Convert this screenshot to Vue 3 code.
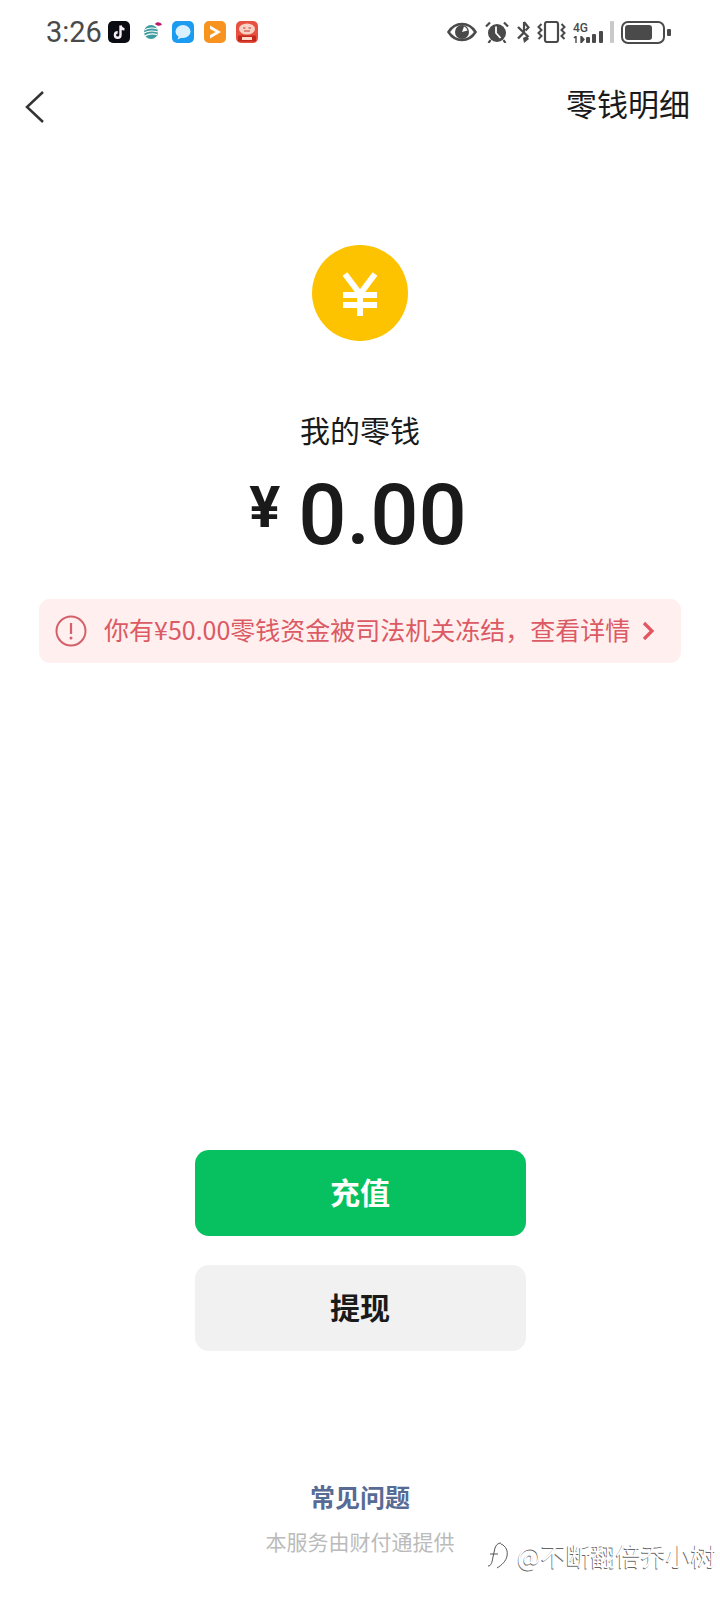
<template>
  <div class="page">
    <div class="status-bar">
      <span class="time">3:26</span>
      <div class="app-icons">
        <svg class="app" viewBox="0 0 22 22">
          <rect width="22" height="22" rx="5" fill="#0b0b12" />
          <path d="M12.500 4.500v9.500a2.800 2.800 0 1 1-2.800-2.800M12.500 4.500c.3 2.200 1.700 3.700 4 3.900" fill="none" stroke="#f6eef2" stroke-width="2.400" />
        </svg>
        <svg class="app" viewBox="0 0 22 22">
          <circle cx="11" cy="11" r="7" fill="#3f9b9e" />
          <path d="M4.500 9c4-2.500 8-2.500 13-1M4 12c4-2.500 9-2.500 14-1M5 15c3-2 8-2.500 12-1.500" fill="none" stroke="#fff" stroke-width="1.100" />
          <path d="M15 3c1.500-2.500 5-2 7 .5-2 1.800-5 1.800-7-.5z" fill="#c2186b" />
        </svg>
        <svg class="app" viewBox="0 0 22 22">
          <rect width="22" height="22" rx="5" fill="#1c9cf0" />
          <ellipse cx="11" cy="10.500" rx="7.500" ry="6.500" fill="#d9f0ff" />
          <path d="M7 14.500l-1.500 4 5.500-2.500z" fill="#d9f0ff" />
        </svg>
        <svg class="app" viewBox="0 0 22 22">
          <rect width="22" height="22" rx="5" fill="#f7931e" />
          <path d="M6 4.500l11 6.500-11 6.500v-3.500l5.500-3-5.500-3z" fill="#fff" />
        </svg>
        <svg class="app" viewBox="0 0 22 22">
          <rect width="22" height="22" rx="5" fill="#e8503f" />
          <ellipse cx="11" cy="8" rx="8" ry="5.500" fill="#f9d2c6" />
          <path d="M7 7h2.500M12.500 7H15M8 10h6" stroke="#c23b2e" stroke-width="1.200" />
          <rect x="2" y="14.500" width="18" height="6" rx="1" fill="#c4281c" />
          <rect x="6" y="16" width="10" height="3" fill="#ffd9c9" />
        </svg>
      </div>
      <div class="sys-icons">
        <svg class="eye" viewBox="0 0 30 20">
          <path d="M1.500 10C5 4.500 10 2 15 2s10 2.500 13.500 8C25 15.500 20 18 15 18S5 15.500 1.500 10z" fill="none" stroke="#4a4a4a" stroke-width="2.600" />
          <circle cx="15" cy="10" r="7" fill="#4a4a4a" />
          <path d="M15 10l2-5.500a6 6 0 0 1 3.500 4z" fill="#fff" />
        </svg>
        <svg class="alarm" viewBox="0 0 24 22">
          <circle cx="12" cy="12" r="9" fill="#4a4a4a" />
          <path d="M11 5.500V12l4.500 5" fill="none" stroke="#fff" stroke-width="1.800" />
          <path d="M1 5.500l4-4M23 5.500l-4-4M5.500 19l-2 3M18.500 19l2 3" stroke="#4a4a4a" stroke-width="2.200" fill="none" />
        </svg>
        <svg class="bluetooth" viewBox="0 0 13 23">
          <path d="M1 6l10.500 10M1 17.500l6-6" fill="none" stroke="#4a4a4a" stroke-width="2.400" />
          <path d="M7 1v10M7 1l4.500 5.500-3 3" fill="none" stroke="#4a4a4a" stroke-width="2.200" />
          <path d="M6 17l4-2 2 3-5 4z" fill="#4a4a4a" />
        </svg>
        <svg class="vibrate" viewBox="0 0 29 22">
          <rect x="8" y="1" width="13" height="20" rx="2" fill="none" stroke="#4a4a4a" stroke-width="2.200" />
          <path d="M4.500 3L1.500 6l3 3-3 3 3 3-3 3M24.500 3l3 3-3 3 3 3-3 3 3 3" fill="none" stroke="#4a4a4a" stroke-width="2" />
        </svg>
        <div class="signal">
          <div class="net">
            <span class="net-label">4G</span>
            <svg class="arrows" viewBox="0 0 13 7">
              <path d="M3 0v7M1 2l2-2M8 0l3 3.500L8 7z" stroke="#4a4a4a" stroke-width="1.400" fill="#4a4a4a" />
            </svg>
          </div>
          <svg class="bars" viewBox="0 0 28 22">
            <rect x="0" y="16" width="4" height="6" rx="1" fill="#4a4a4a" />
            <rect x="6" y="13" width="4" height="9" rx="1" fill="#4a4a4a" />
            <rect x="13" y="10" width="4" height="12" rx="1" fill="#4a4a4a" />
            <rect x="24" y="0" width="4" height="22" rx="1" fill="#c9c9c9" />
          </svg>
        </div>
        <div class="battery">
          <div class="battery-body"><div class="battery-fill"></div></div>
          <div class="battery-nub"></div>
        </div>
      </div>
    </div>

    <div class="nav">
      <svg class="back" viewBox="0 0 20 34">
        <path d="M18 2L2 17l16 15" fill="none" stroke="#333" stroke-width="2.500" />
      </svg>
      <span class="nav-title">零钱明细</span>
    </div>

    <svg class="coin" viewBox="0 0 96 96">
      <circle cx="48" cy="48" r="48" fill="#fdc300" />
      <path d="M33 29l15 20 15-20M48 49v22M31 50h34M31 60h34" fill="none" stroke="#fff" stroke-width="6" />
    </svg>

    <p class="label">我的零钱</p>
    <div class="amount">
      <span class="currency">¥</span>
      <span class="value">{{ saldo }}</span>
    </div>

    <div class="notice">
      <svg class="notice-icon" viewBox="0 0 32 32">
        <circle cx="16" cy="16" r="14.500" fill="none" stroke="#d4606a" stroke-width="2" />
        <path d="M16 8v11" stroke="#d4606a" stroke-width="2.200" />
        <circle cx="16" cy="23" r="1.500" fill="#d4606a" />
      </svg>
      <span class="notice-text">你有¥50.00零钱资金被司法机关冻结，查看详情</span>
      <svg class="notice-arrow" viewBox="0 0 13 20">
        <path d="M2 2l8 8-8 8" fill="none" stroke="#e25561" stroke-width="3.200" />
      </svg>
    </div>

    <button class="btn btn-green">充值</button>
    <button class="btn btn-gray">提现</button>

    <div class="faq">常见问题</div>
    <div class="source">本服务由财付通提供</div>

    <div class="watermark">
      <svg class="wm-logo" viewBox="0 0 22 28">
        <path d="M1 25c3 0 4-3 5-9l2-9c1-3 3-5 6-5M3 13h8" fill="none" stroke="#555" stroke-width="1" />
        <path d="M14 3c5 2 7 7 6 12-1 5-5 9-10 12" fill="none" stroke="#555" stroke-width="1" />
      </svg>
      <span class="wm-text">@不断翻倍乔小树</span>
    </div>
  </div>
</template>

<script setup>
const saldo = '0.00'
</script>

<style scoped>
.page {
  position: relative;
  width: 720px;
  height: 1600px;
  overflow: hidden;
  background: #fff;
  display: flex;
  flex-direction: column;
  font-family: "Noto Sans CJK SC", "Noto Sans", sans-serif;
  color: #1a1a1a;
}

.status-bar {
  height: 64px;
  display: flex;
  align-items: center;
  padding-left: 46px;
  color: #4a4a4a;
}

.time {
  width: 62px;
  font-family: Roboto, sans-serif;
  font-size: 29px;
}

.app-icons {
  display: flex;
  gap: 10px;
}

.app {
  width: 22px;
  height: 22px;
}

.sys-icons {
  display: flex;
  align-items: center;
  margin-left: 189px;
}

.eye {
  width: 30px;
  height: 20px;
}

.alarm {
  width: 24px;
  height: 22px;
  margin-left: 8px;
}

.bluetooth {
  width: 13px;
  height: 23px;
  margin-left: 8px;
}

.vibrate {
  width: 29px;
  height: 22px;
  margin-left: 7px;
}

.signal {
  display: flex;
  align-items: flex-end;
  margin-left: 7px;
}

.net {
  width: 13px;
  display: flex;
  flex-direction: column;
  gap: 2px;
}

.net-label {
  font-family: Roboto, sans-serif;
  font-size: 12px;
  font-weight: 500;
  line-height: 12px;
}

.arrows {
  width: 13px;
  height: 7px;
}

.bars {
  width: 28px;
  height: 22px;
}

.battery {
  display: flex;
  align-items: center;
  gap: 2px;
  margin-left: 7px;
}

.battery-body {
  width: 44px;
  height: 23px;
  box-sizing: border-box;
  border: 2px solid #4a4a4a;
  border-radius: 7px;
  padding: 2px;
}

.battery-fill {
  width: 27px;
  height: 100%;
  background: #4a4a4a;
  border-radius: 3px;
}

.battery-nub {
  width: 4px;
  height: 7px;
  background: #4a4a4a;
  border-radius: 1px;
}

.nav {
  height: 82px;
  display: flex;
  align-items: center;
  justify-content: space-between;
  padding: 0 30px 0 25px;
}

.back {
  width: 20px;
  height: 34px;
  margin-top: 4px;
}

.nav-title {
  font-size: 31px;
  line-height: 40px;
  padding-bottom: 4px;
}

.coin {
  display: block;
  width: 96px;
  height: 96px;
  margin: 99px auto 0;
}

.label {
  margin: 68px 0 0;
  text-align: center;
  font-size: 30px;
  line-height: 40px;
}

.amount {
  margin-top: 21px;
  height: 90px;
  display: flex;
  justify-content: center;
  align-items: center;
  gap: 18px;
  padding-right: 4px;
  font-family: Roboto, sans-serif;
  font-weight: 500;
}

.currency {
  font-size: 58px;
  font-weight: 700;
  line-height: 90px;
  margin-top: -16px;
}

.value {
  font-size: 85px;
  line-height: 90px;
}

.notice {
  margin: 39px 39px 0 39px;
  height: 64px;
  display: flex;
  align-items: center;
  padding-left: 16px;
  background: #ffefef;
  border-radius: 11px;
  color: #db5a63;
}

.notice-icon {
  width: 32px;
  height: 32px;
}

.notice-text {
  margin-left: 17px;
  font-size: 25px;
  line-height: 36px;
  padding-bottom: 4px;
  white-space: nowrap;
}

.notice-arrow {
  width: 13px;
  height: 20px;
  margin-left: 12px;
}

.btn {
  display: block;
  width: 331px;
  height: 86px;
  margin: 0 auto;
  padding: 0 0 4px;
  border: none;
  border-radius: 14px;
  font-family: inherit;
  font-size: 30px;
  font-weight: 700;
}

.btn-green {
  margin-top: 487px;
  background: #07c160;
  color: #fff;
}

.btn-gray {
  margin-top: 29px;
  background: #f1f1f1;
  color: #1a1a1a;
}

.faq {
  margin-top: 127px;
  text-align: center;
  font-size: 25px;
  font-weight: 700;
  line-height: 36px;
  color: #576b95;
}

.source {
  margin-top: 12px;
  text-align: center;
  font-size: 21px;
  line-height: 30px;
  color: #bbb;
}

/* marca de agua sobre la captura */
.watermark {
  position: absolute;
  left: 487px;
  top: 1541px;
  display: flex;
  align-items: center;
  gap: 8px;
}

.wm-logo {
  width: 22px;
  height: 28px;
}

.wm-text {
  font-size: 25px;
  line-height: 28px;
  white-space: nowrap;
  color: #fff;
  text-shadow: -0.6px 0.6px 0 #666;
}
</style>
